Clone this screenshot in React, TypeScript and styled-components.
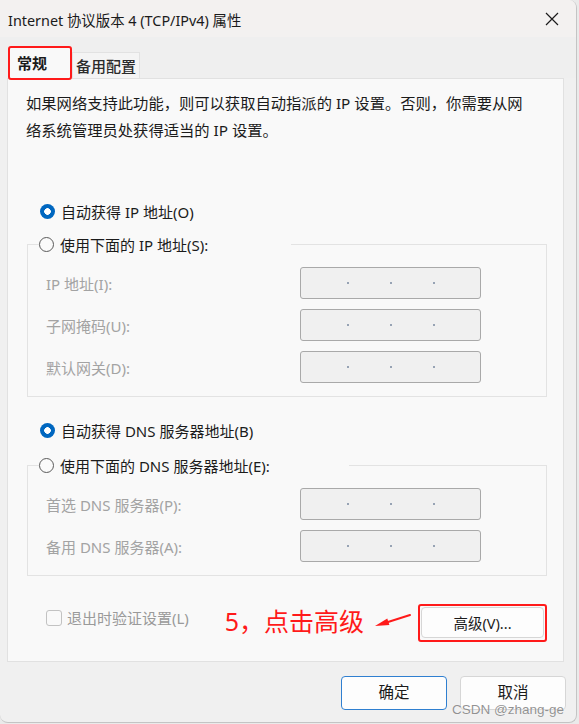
import styled, { createGlobalStyle, css } from "styled-components";

const GlobalStyle = createGlobalStyle`
  html, body {
    margin: 0;
    padding: 0;
    background: #eaeaea;
  }
  body {
    font-family: "Noto Sans", "Noto Sans CJK SC", sans-serif;
    color: #1b1b1b;
  }
`;

const ipRows = [
  { label: "IP 地址(I):" },
  { label: "子网掩码(U):" },
  { label: "默认网关(D):" },
];

const dnsRows = [
  { label: "首选 DNS 服务器(P):" },
  { label: "备用 DNS 服务器(A):" },
];

const App = () => {
  return (
    <>
      <GlobalStyle />
      <Window>
        <TitleBar>
          <Title>Internet 协议版本 4 (TCP/IPv4) 属性</Title>
          <CloseButton aria-label="close">
            <svg width="14" height="14" viewBox="0 0 14 14">
              <path d="M1 1 L13 13 M13 1 L1 13" stroke="#1b1b1b" strokeWidth="1.2" fill="none" />
            </svg>
          </CloseButton>
        </TitleBar>

        <TabStrip>
          <Tab $active>常规</Tab>
          <Tab>备用配置</Tab>
        </TabStrip>

        <Panel>
          <Description>
            如果网络支持此功能，则可以获取自动指派的 IP 设置。否则，你需要从网
            <br />
            络系统管理员处获得适当的 IP 设置。
          </Description>

          <RadioRow $top={56}>
            <Radio $checked />
            自动获得 IP 地址(O)
          </RadioRow>

          <Group $top={11}>
            <Legend $width={252}>
              <RadioRow>
                <Radio />
                使用下面的 IP 地址(S):
              </RadioRow>
            </Legend>
            <FieldGrid>
              {ipRows.map((r) => (
                <FieldRow key={r.label}>
                  <FieldLabel>{r.label}</FieldLabel>
                  <IpBox>
                    <Dot />
                    <Dot />
                    <Dot />
                  </IpBox>
                </FieldRow>
              ))}
            </FieldGrid>
          </Group>

          <RadioRow $top={22}>
            <Radio $checked />
            自动获得 DNS 服务器地址(B)
          </RadioRow>

          <Group $top={13}>
            <Legend $width={310}>
              <RadioRow>
                <Radio />
                使用下面的 DNS 服务器地址(E):
              </RadioRow>
            </Legend>
            <FieldGrid>
              {dnsRows.map((r) => (
                <FieldRow key={r.label}>
                  <FieldLabel>{r.label}</FieldLabel>
                  <IpBox>
                    <Dot />
                    <Dot />
                    <Dot />
                  </IpBox>
                </FieldRow>
              ))}
            </FieldGrid>
          </Group>

          <BottomRow>
            <CheckLabel>
              <CheckBox />
              退出时验证设置(L)
            </CheckLabel>
            <Hint>
              <HintText>5，点击高级</HintText>
              <svg width="40" height="20" viewBox="0 0 40 20">
                <path d="M38 2 L16 9" stroke="#ff1a1a" strokeWidth="2" strokeLinecap="round" />
                <polygon points="3,13 15.3,5.5 17.4,12.1" fill="#ff1a1a" />
              </svg>
              <Highlight>
                <PlainButton $width={123}>高级(V)...</PlainButton>
              </Highlight>
            </Hint>
          </BottomRow>
        </Panel>

        <Footer>
          <PlainButton $width={106} $primary>
            确定
          </PlainButton>
          <PlainButton $width={106}>取消</PlainButton>
        </Footer>

        <Watermark>CSDN @zhang-ge</Watermark>
      </Window>
    </>
  );
};

const Window = styled.div`
  position: relative;
  box-sizing: border-box;
  width: 577px;
  height: 723px;
  background: #f0f0f0;
  border-right: 1px solid #c4c4c4;
  border-bottom: 1px solid #c4c4c4;
  border-radius: 0 8px 8px 8px;
  display: flex;
  flex-direction: column;
  overflow: hidden;
`;

const TitleBar = styled.div`
  height: 37px;
  background: #f3f1f0;
  display: flex;
  align-items: center;
  justify-content: space-between;
  padding: 0 14px 0 8px;
`;

const Title = styled.div`
  font-size: 14.4px;
  color: #1b1b1b;
  padding-top: 1px;
`;

const CloseButton = styled.div`
  width: 14px;
  height: 14px;
  display: flex;
  margin-right: 3px;
`;

const TabStrip = styled.div`
  height: 41px;
  background: #efefef;
  display: flex;
  align-items: flex-end;
  padding-left: 8px;
`;

const Tab = styled.div<{ $active?: boolean }>`
  box-sizing: border-box;
  font-size: 15px;
  display: flex;
  align-items: center;
  ${(p) =>
    p.$active
      ? css`
          width: 64px;
          height: 34px;
          padding: 0 0 2px 7px;
          background: #f9f9f9;
          border: 2.5px solid #ff1a1a;
          border-radius: 3px;
          font-weight: 600;
          color: #1b1b1b;
          margin-bottom: -2px;
          position: relative;
          z-index: 1;
        `
      : css`
          width: 68px;
          height: 26px;
          padding-left: 3px;
          background: #f4f4f4;
          border: 1px solid #e2e2e2;
          border-bottom: none;
          color: #2b2b2b;
          font-weight: 500;
        `}
`;

const Panel = styled.div`
  box-sizing: border-box;
  margin: 0 12px 0 7px;
  height: 584px;
  background: #f9f9f9;
  border: 1px solid #e1e1e1;
  padding: 11px 16px 0 19px;
  display: flex;
  flex-direction: column;
`;

const Description = styled.div`
  font-size: 15.3px;
  line-height: 27px;
  color: #1b1b1b;
  white-space: nowrap;
  margin-left: -1px;
`;

const RadioRow = styled.div<{ $top?: number }>`
  display: flex;
  align-items: center;
  gap: 6px;
  height: 22px;
  font-size: 15px;
  color: #1b1b1b;
  margin-top: ${(p) => p.$top ?? 0}px;
  padding-left: 13px;
`;

const Radio = styled.span<{ $checked?: boolean }>`
  box-sizing: border-box;
  width: 15px;
  height: 15px;
  border-radius: 50%;
  flex: none;
  ${(p) =>
    p.$checked
      ? css`
          background: radial-gradient(circle, #ffffff 0 3px, #0067c0 3.6px);
        `
      : css`
          background: #fafafa;
          border: 1px solid #5a5a5a;
        `}
`;

const Group = styled.fieldset<{ $top: number }>`
  margin: ${(p) => p.$top}px 0 0 0;
  padding: 0 0 13px 0;
  border: 1.5px solid #e3e3e3;
  min-width: 0;
`;

const Legend = styled.legend<{ $width: number }>`
  box-sizing: border-box;
  width: ${(p) => p.$width}px;
  padding: 0;
  margin-left: 11px;

  ${RadioRow} {
    padding-left: 0;
    margin-left: 0;
  }
`;

const FieldGrid = styled.div`
  display: flex;
  flex-direction: column;
  gap: 10px;
  padding: 12px 0 0 18px;
`;

const FieldRow = styled.div`
  display: grid;
  grid-template-columns: 254px 181px;
  align-items: center;
`;

const FieldLabel = styled.span`
  font-size: 15px;
  color: #a3a3a3;
`;

const IpBox = styled.div`
  box-sizing: border-box;
  height: 32px;
  background: #f0f0f0;
  border: 1.5px solid #a9a9a9;
  border-radius: 3px;
  display: flex;
  align-items: center;
  padding-left: 46px;
  gap: 41px;
`;

const Dot = styled.span`
  width: 2px;
  height: 2px;
  background: #7a8aa0;
  border-radius: 1px;
`;

const BottomRow = styled.div`
  display: flex;
  align-items: center;
  justify-content: space-between;
  margin-top: 26px;
`;

const CheckLabel = styled.label`
  display: flex;
  align-items: center;
  gap: 5px;
  padding-left: 19px;
  margin-bottom: 10px;
  font-size: 15px;
  color: #9a9a9a;
`;

const CheckBox = styled.span`
  box-sizing: border-box;
  width: 16px;
  height: 16px;
  border: 1.5px solid #c2c2c2;
  border-radius: 3px;
  background: #f9f9f9;
`;

const Hint = styled.div`
  display: flex;
  align-items: center;
  gap: 4px;
`;

const HintText = styled.span`
  font-size: 25px;
  color: #ff1a1a;
  margin-right: 4px;
  padding-bottom: 5px;
`;

const Highlight = styled.div`
  box-sizing: border-box;
  width: 129px;
  height: 38px;
  border: 2.5px solid #ff1a1a;
  border-radius: 3px;
  display: flex;
  align-items: center;
  justify-content: center;
  margin-left: 2px;
`;

const PlainButton = styled.div<{ $width: number; $primary?: boolean }>`
  box-sizing: border-box;
  width: ${(p) => p.$width}px;
  height: 31px;
  background: #fdfdfd;
  border: 1px solid ${(p) => (p.$primary ? "#2f7fd0" : "#d6d6d6")};
  border-radius: 4px;
  display: flex;
  align-items: center;
  justify-content: center;
  font-size: 14.5px;
  color: #1b1b1b;
`;

const Footer = styled.div`
  flex: 1;
  display: flex;
  justify-content: flex-end;
  align-items: flex-start;
  gap: 13px;
  padding: 14px 10px 0 0;

  ${PlainButton} {
    height: 34px;
    font-size: 15.5px;
    padding-bottom: 4px;
  }
`;

const Watermark = styled.div`
  position: absolute;
  right: 12px;
  bottom: 5px;
  font-family: "Liberation Sans", "Noto Sans", sans-serif;
  font-size: 13.5px;
  color: rgba(110, 110, 110, 0.75);
  text-shadow: 0 0 1px #ffffff;
  pointer-events: none;
`;

export default App;
